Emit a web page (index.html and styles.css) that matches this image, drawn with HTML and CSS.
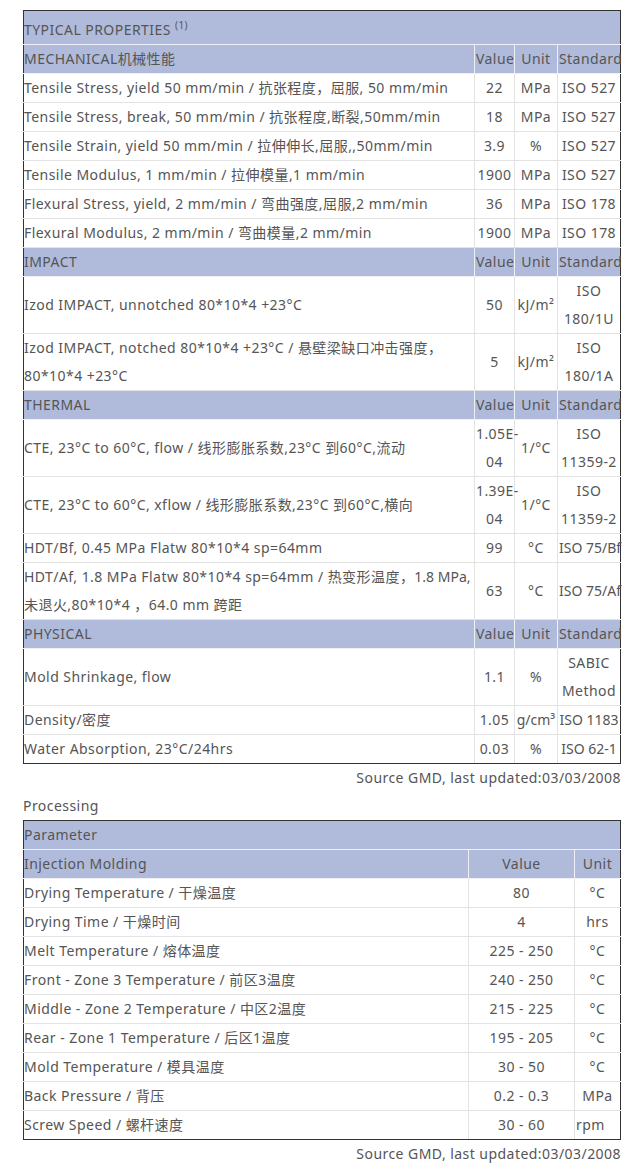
FILE: index.html
```html
<!DOCTYPE html>
<html lang="en">
<head>
  <meta charset="UTF-8" />
  <meta name="viewport" content="width=device-width, initial-scale=1.0"/>
  <title>Typical Properties</title>
  <link rel="stylesheet" href="styles.css">
</head>
<body>
<div class="page">

  <table class="props">
    <colgroup>
      <col>
      <col class="c-val">
      <col class="c-unit">
      <col class="c-std">
    </colgroup>
    <tr class="title">
      <th colspan="4">TYPICAL PROPERTIES <sup>(1)</sup></th>
    </tr>
    <tr class="head">
      <th>MECHANICAL机械性能</th><th>Value</th><th>Unit</th><th>Standard</th>
    </tr>
    <tr><td>Tensile Stress, yield 50 mm/min / 抗张程度，屈服, 50 mm/min</td><td>22</td><td>MPa</td><td>ISO 527</td></tr>
    <tr><td>Tensile Stress, break, 50 mm/min / 抗张程度,断裂,50mm/min</td><td>18</td><td>MPa</td><td>ISO 527</td></tr>
    <tr><td>Tensile Strain, yield 50 mm/min / 拉伸伸长,屈服,,50mm/min</td><td>3.9</td><td>%</td><td>ISO 527</td></tr>
    <tr><td>Tensile Modulus, 1 mm/min / 拉伸模量,1 mm/min</td><td>1900</td><td>MPa</td><td>ISO 527</td></tr>
    <tr><td>Flexural Stress, yield, 2 mm/min / 弯曲强度,屈服,2 mm/min</td><td>36</td><td>MPa</td><td>ISO 178</td></tr>
    <tr><td>Flexural Modulus, 2 mm/min / 弯曲模量,2 mm/min</td><td>1900</td><td>MPa</td><td>ISO 178</td></tr>

    <tr class="head">
      <th>IMPACT</th><th>Value</th><th>Unit</th><th>Standard</th>
    </tr>
    <tr><td>Izod IMPACT, unnotched 80*10*4 +23°C</td><td>50</td><td>kJ/m²</td><td>ISO 180/1U</td></tr>
    <tr><td>Izod IMPACT, notched 80*10*4 +23°C / 悬壁梁缺口冲击强度，80*10*4 +23°C</td><td>5</td><td>kJ/m²</td><td>ISO 180/1A</td></tr>

    <tr class="head">
      <th>THERMAL</th><th>Value</th><th>Unit</th><th>Standard</th>
    </tr>
    <tr><td>CTE, 23°C to 60°C, flow / 线形膨胀系数,23°C 到60°C,流动</td><td>1.05E-04</td><td>1/°C</td><td>ISO 11359-2</td></tr>
    <tr><td>CTE, 23°C to 60°C, xflow / 线形膨胀系数,23°C 到60°C,横向</td><td>1.39E-04</td><td>1/°C</td><td>ISO 11359-2</td></tr>
    <tr><td>HDT/Bf, 0.45 MPa Flatw 80*10*4 sp=64mm</td><td>99</td><td>°C</td><td class="nowrap">ISO 75/Bf</td></tr>
    <tr><td>HDT/Af, 1.8 MPa Flatw 80*10*4 sp=64mm / 热变形温度，<span class="nowrap">1.8 MPa,</span><br>未退火,80*10*4 ，64.0 mm 跨距</td><td>63</td><td>°C</td><td class="nowrap">ISO 75/Af</td></tr>

    <tr class="head">
      <th>PHYSICAL</th><th>Value</th><th>Unit</th><th>Standard</th>
    </tr>
    <tr><td>Mold Shrinkage, flow</td><td>1.1</td><td>%</td><td>SABIC Method</td></tr>
    <tr><td>Density/密度</td><td>1.05</td><td class="nowrap">g/cm³</td><td class="nowrap">ISO 1183</td></tr>
    <tr><td>Water Absorption, 23°C/24hrs</td><td>0.03</td><td>%</td><td class="nowrap">ISO 62-1</td></tr>
  </table>

  <p class="source">Source GMD, last updated:03/03/2008</p>

  <p class="section">Processing</p>

  <table class="proc">
    <colgroup>
      <col>
      <col class="p-val">
      <col class="p-unit">
    </colgroup>
    <tr class="head">
      <th colspan="3">Parameter</th>
    </tr>
    <tr class="head">
      <th>Injection Molding</th><th>Value</th><th>Unit</th>
    </tr>
    <tr><td>Drying Temperature / 干燥温度</td><td>80</td><td>°C</td></tr>
    <tr><td>Drying Time / 干燥时间</td><td>4</td><td>hrs</td></tr>
    <tr><td>Melt Temperature / 熔体温度</td><td>225 - 250</td><td>°C</td></tr>
    <tr><td>Front - Zone 3 Temperature / 前区3温度</td><td>240 - 250</td><td>°C</td></tr>
    <tr><td>Middle - Zone 2 Temperature / 中区2温度</td><td>215 - 225</td><td>°C</td></tr>
    <tr><td>Rear - Zone 1 Temperature / 后区1温度</td><td>195 - 205</td><td>°C</td></tr>
    <tr><td>Mold Temperature / 模具温度</td><td>30 - 50</td><td>°C</td></tr>
    <tr><td>Back Pressure / 背压</td><td>0.2 - 0.3</td><td>MPa</td></tr>
    <tr><td>Screw Speed / 螺杆速度</td><td>30 - 60</td><td class="left">rpm</td></tr>
  </table>

  <p class="source">Source GMD, last updated:03/03/2008</p>

</div>
</body>
</html>
```

FILE: styles.css
```css
body {
  margin: 0;
  font-family: "Noto Sans", "Noto Sans CJK SC", sans-serif;
  font-size: 14px;
  letter-spacing: 0.45px;
  color: #555;
  background: #fff;
}
.page {
  width: 598px;
  padding: 10px 0 0 23px;
}
table {
  width: 598px;
  border-collapse: collapse;
  table-layout: fixed;
}
th, td {
  padding: 0 1px;
  line-height: 28px;
  font-weight: normal;
  border: 1px solid #e3e3e3;
  text-align: center;
  vertical-align: middle;
}
th:first-child, td:first-child {
  text-align: left;
  padding-left: 0;
  border-left-color: #333;
}
th:last-child, td:last-child {
  border-right-color: #333;
}
tr:last-child td {
  border-bottom-color: #333;
}
.head th, .title th {
  background: #b0bbdb;
  border-top-color: #eef0f6;
  border-bottom-color: #eef0f6;
  border-right-color: #eef0f6;
}
.head th:last-child, .title th {
  border-right-color: #333;
}
tr.title th, tr.head:first-child th {
  border-top-color: #333;
}
.title th {
  height: 31px;
  padding-top: 2px;
  vertical-align: bottom;
}
sup {
  font-size: 10px;
  line-height: 0;
}
.c-val { width: 40px; }
.c-unit { width: 43px; }
.c-std { width: 63px; }
.p-val { width: 106px; }
.p-unit { width: 46px; }
.nowrap { white-space: nowrap; letter-spacing: 0; }
td.left { text-align: left; }
.source {
  margin: 0;
  text-align: right;
  line-height: 28px;
}
.section {
  margin: 0;
  line-height: 28px;
}
```
